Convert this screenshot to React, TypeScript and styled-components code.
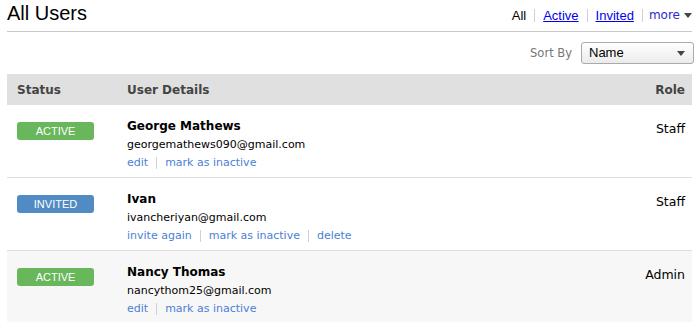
import styled, { createGlobalStyle } from 'styled-components';

const GlobalStyle = createGlobalStyle`
  body {
    margin: 0;
    background: #fff;
    font-family: 'DejaVu Sans', Verdana, sans-serif;
  }
`;

type Status = 'active' | 'invited';

interface User {
  name: string;
  email: string;
  status: Status;
  role: string;
  actions: string[];
}

const users: User[] = [
  {
    name: 'George Mathews',
    email: 'georgemathews090@gmail.com',
    status: 'active',
    role: 'Staff',
    actions: ['edit', 'mark as inactive'],
  },
  {
    name: 'Ivan',
    email: 'ivancheriyan@gmail.com',
    status: 'invited',
    role: 'Staff',
    actions: ['invite again', 'mark as inactive', 'delete'],
  },
  {
    name: 'Nancy Thomas',
    email: 'nancythom25@gmail.com',
    status: 'active',
    role: 'Admin',
    actions: ['edit', 'mark as inactive'],
  },
];

const Page = styled.div`
  padding: 0 7px;
  width: 685px;
`;

const TitleBar = styled.div`
  display: flex;
  justify-content: space-between;
  align-items: flex-end;
  height: 31px;
  border-bottom: 1px solid #c8c8c8;
`;

const Title = styled.h1`
  margin: 0 0 6px;
  font-family: 'Liberation Sans', Arial, sans-serif;
  font-weight: normal;
  font-size: 20px;
  color: #000;
`;

const Filters = styled.div`
  display: flex;
  align-items: center;
  margin-bottom: 9px;
  font-family: 'Liberation Sans', Arial, sans-serif;
  font-size: 13px;
`;

const FilterLink = styled.a<{ $current?: boolean }>`
  color: ${(p) => (p.$current ? '#000' : '#0000ee')};
  text-decoration: ${(p) => (p.$current ? 'none' : 'underline')};
  padding: 0 8px;
  border-left: 1px solid #d0d0d0;
  line-height: 13px;
  cursor: pointer;
  &:first-child {
    border-left: none;
  }
`;

const More = styled(FilterLink)`
  font-family: 'DejaVu Sans', Verdana, sans-serif;
  font-size: 12px;
  color: #2a2acc;
  text-decoration: none;
  padding-left: 6px;
  padding-right: 0;
  display: flex;
  align-items: center;
  gap: 4px;
  &::after {
    content: '';
    border-left: 4px solid transparent;
    border-right: 4px solid transparent;
    border-top: 5px solid #444;
  }
`;

const SortBar = styled.div`
  display: flex;
  justify-content: flex-end;
  align-items: center;
  gap: 9px;
  height: 42px;
  margin-right: -2px;
`;

const SortLabel = styled.span`
  font-size: 11.5px;
  color: #777;
`;

const Select = styled.div`
  box-sizing: border-box;
  width: 113px;
  height: 22px;
  border: 1px solid #aaa;
  border-radius: 3px;
  background: linear-gradient(#fff, #ebebeb);
  display: flex;
  align-items: center;
  justify-content: space-between;
  padding: 0 8px 2px 7px;
  font-family: 'Liberation Sans', Arial, sans-serif;
  font-size: 13px;
  color: #000;
  &::after {
    content: '';
    margin-top: 2px;
    border-left: 4px solid transparent;
    border-right: 4px solid transparent;
    border-top: 5px solid #444;
  }
`;

const Row = styled.div<{ $head?: boolean; $shaded?: boolean }>`
  display: grid;
  grid-template-columns: 110px 1fr auto;
  padding: ${(p) => (p.$head ? '0 7px 0 10px' : '17px 7px 0 10px')};
  height: ${(p) => (p.$head ? '31px' : '73px')};
  box-sizing: border-box;
  align-items: ${(p) => (p.$head ? 'center' : 'start')};
  background: ${(p) => (p.$head ? '#e0e0e0' : p.$shaded ? '#f7f7f7' : '#fff')};
  border-bottom: ${(p) => (p.$head ? 'none' : '1px solid #dedede')};
  &:last-child {
    border-bottom: none;
  }
`;

const HeadCell = styled.div<{ $right?: boolean }>`
  font-weight: bold;
  font-size: 12px;
  color: #444;
  text-align: ${(p) => (p.$right ? 'right' : 'left')};
`;

const Badge = styled.div<{ $status: Status }>`
  width: 77px;
  height: 18px;
  border-radius: 3px;
  background: ${(p) => (p.$status === 'active' ? '#68b75b' : '#508bc3')};
  color: #fff;
  font-family: 'Liberation Sans', Arial, sans-serif;
  font-size: 11px;
  line-height: 18px;
  text-align: center;
  text-transform: uppercase;
`;

const Details = styled.div`
  display: flex;
  flex-direction: column;
  margin-top: -5px;
`;

const Name = styled.div`
  font-weight: bold;
  font-size: 12px;
  line-height: 18px;
  color: #000;
`;

const Email = styled.div`
  font-size: 11px;
  line-height: 19px;
  color: #000;
`;

const Actions = styled.div`
  display: flex;
  align-items: center;
  font-size: 11px;
  line-height: 20px;
  padding-top: 3px;
`;

const Action = styled.a`
  color: #4a7fd6;
  cursor: pointer;
  padding: 0 8px;
  border-left: 1px solid #d0d0e0;
  line-height: 12px;
  &:first-child {
    padding-left: 0;
    border-left: none;
  }
`;

const Role = styled.div`
  font-size: 12.5px;
  color: #000;
  text-align: right;
  margin-top: -1px;
`;

export default function App() {
  return (
    <>
      <GlobalStyle />
      <Page>
        <TitleBar>
          <Title>All Users</Title>
          <Filters>
            <FilterLink $current>All</FilterLink>
            <FilterLink>Active</FilterLink>
            <FilterLink>Invited</FilterLink>
            <More>more</More>
          </Filters>
        </TitleBar>
        <SortBar>
          <SortLabel>Sort By</SortLabel>
          <Select>Name</Select>
        </SortBar>
        <div>
          <Row $head>
            <HeadCell>Status</HeadCell>
            <HeadCell>User Details</HeadCell>
            <HeadCell $right>Role</HeadCell>
          </Row>
          {users.map((u, i) => (
            <Row key={u.email} $shaded={i === 2}>
              <Badge $status={u.status}>{u.status}</Badge>
              <Details>
                <Name>{u.name}</Name>
                <Email>{u.email}</Email>
                <Actions>
                  {u.actions.map((a) => (
                    <Action key={a}>{a}</Action>
                  ))}
                </Actions>
              </Details>
              <Role>{u.role}</Role>
            </Row>
          ))}
        </div>
      </Page>
    </>
  );
}
